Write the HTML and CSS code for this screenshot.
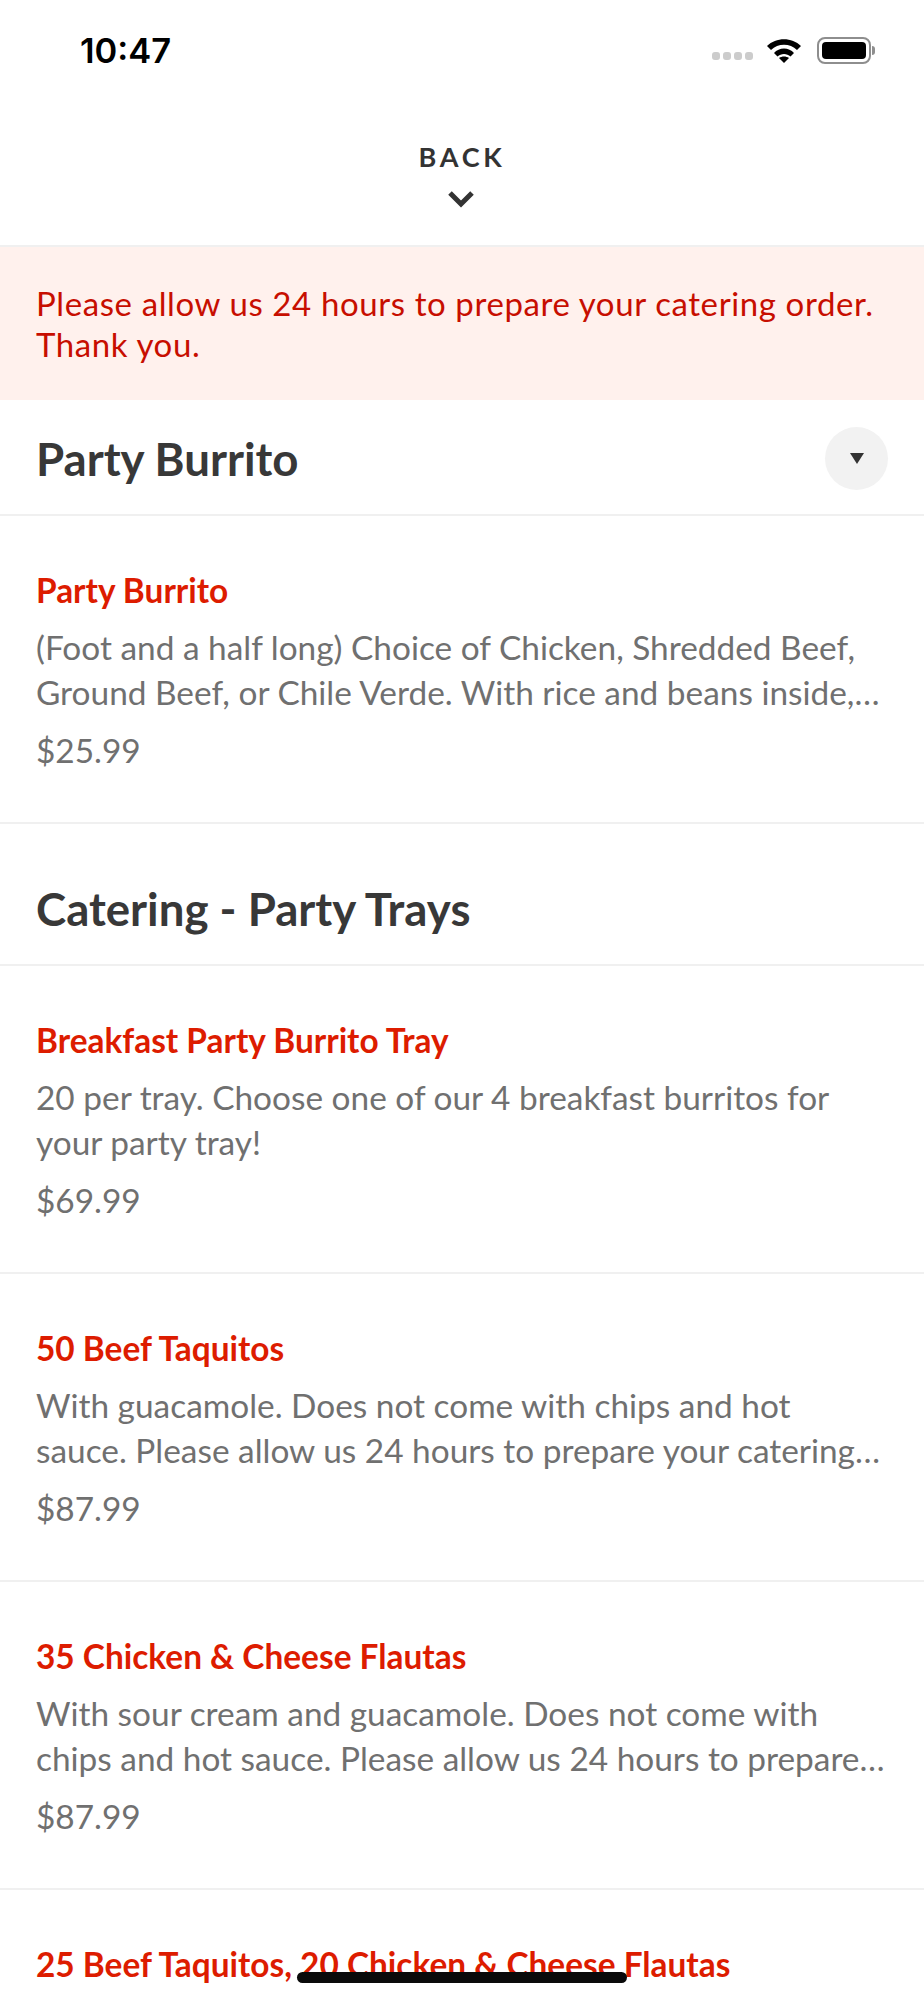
FILE: index.html
```html
<!DOCTYPE html>
<html lang="en">
<head>
  <meta charset="UTF-8">
  <meta name="viewport" content="width=device-width, initial-scale=1.0">
  <link rel="stylesheet" href="styles.css">
</head>
<body>
  <div class="page">
    <!-- status bar -->
    <div class="status">
      <span class="time">10:47</span>
      <div class="status-icons">
        <div class="signal"><i></i><i></i><i></i><i></i></div>
        <svg class="wifi" width="36" height="26" viewBox="0 0 36 26">
          <path d="M1 9 C10 0 26 0 35 9 L31 13 C24 6 12 6 5 13 Z" fill="#000"/>
          <path d="M8 16 C13 10 23 10 28 16 L24.5 19.5 C21 16 15 16 11.5 19.5 Z" fill="#000"/>
          <path d="M13 21 C16 19 20 19 23 21 L18 26 Z" fill="#000"/>
        </svg>
        <div class="battery"><div class="battery-fill"></div></div>
        <div class="battery-cap"></div>
      </div>
    </div>

    <div class="back">
      <span class="back-label">BACK</span>
      <svg class="back-arrow" width="28" height="18" viewBox="0 0 28 18"><path d="M3 3 L14 14 L25 3" fill="none" stroke="#333" stroke-width="5"/></svg>
    </div>

    <div class="notice">Please allow us 24 hours to prepare your catering order.<br>Thank you.</div>

    <div class="section-head section-first">
      <h2>Party Burrito</h2>
      <div class="toggle"><span class="toggle-arrow"></span></div>
    </div>
    <div class="item">
      <div class="item-name">Party Burrito</div>
      <div class="item-desc">(Foot and a half long) Choice of Chicken, Shredded Beef,<br>Ground Beef, or Chile Verde. With rice and beans inside,…</div>
      <div class="item-price">$25.99</div>
    </div>

    <div class="section-head">
      <h2>Catering - Party Trays</h2>
    </div>
    <div class="item">
      <div class="item-name">Breakfast Party Burrito Tray</div>
      <div class="item-desc">20 per tray. Choose one of our 4 breakfast burritos for<br>your party tray!</div>
      <div class="item-price">$69.99</div>
    </div>
    <div class="item">
      <div class="item-name">50 Beef Taquitos</div>
      <div class="item-desc">With guacamole. Does not come with chips and hot<br>sauce. Please allow us 24 hours to prepare your catering…</div>
      <div class="item-price">$87.99</div>
    </div>
    <div class="item">
      <div class="item-name">35 Chicken &amp; Cheese Flautas</div>
      <div class="item-desc">With sour cream and guacamole. Does not come with<br>chips and hot sauce. Please allow us 24 hours to prepare…</div>
      <div class="item-price">$87.99</div>
    </div>
    <div class="item">
      <div class="item-name">25 Beef Taquitos, 20 Chicken &amp; Cheese Flautas</div>
    </div>

    <div class="home-bar"></div>
  </div>
</body>
</html>
```

FILE: styles.css
```css
html {
	background-color: #fff;
}

body {
	margin: 0;
	padding: 0;
	font-family: Lato, sans-serif;
	color: #333;
}

.page {
	position: relative;
	width: 924px;
	height: 2000px;
	overflow: hidden;
	background-color: #fff;
}

.status {
	height: 100px;
	display: flex;
	justify-content: space-between;
	align-items: center;
	padding: 0 49px 0 80px;
	box-sizing: border-box;
}

.time {
	font-family: Inter, sans-serif;
	font-size: 34.5px;
	font-weight: 600;
	color: #000;
}

.status-icons {
	display: flex;
	align-items: center;
}

.signal {
	display: flex;
	gap: 3px;
	margin: 12px 13px 0 0;
}

.signal i {
	width: 8px;
	height: 8px;
	border-radius: 3px;
	background-color: #ccc;
}

.battery {
	width: 54px;
	height: 27px;
	margin-left: 15px;
	padding: 3px;
	box-sizing: border-box;
	border: 2px solid #8e8e8e;
	border-radius: 8px;
}

.battery-fill {
	height: 100%;
	background-color: #000;
	border-radius: 4px;
}

.battery-cap {
	width: 3px;
	height: 9px;
	margin-left: 1px;
	background-color: #8e8e8e;
	border-radius: 0 3px 3px 0;
}

.back {
	height: 147px;
	box-sizing: border-box;
	padding-top: 42px;
	display: flex;
	flex-direction: column;
	align-items: center;
	gap: 18px;
	border-bottom: 2px solid #f0f0f0;
}

.back-label {
	font-size: 27px;
	line-height: 30px;
	font-weight: 700;
	letter-spacing: 3.8px;
	color: #333;
}

.back-arrow {
	margin-right: 2px;
}

.notice {
	height: 153px;
	box-sizing: border-box;
	padding: 36px 36px 0;
	font-size: 33px;
	line-height: 41px;
	letter-spacing: 0.6px;
	color: #c70e00;
	background-color: #fff1ed;
}

.section-head {
	height: 142px;
	box-sizing: border-box;
	padding: 0 36px 30px;
	display: flex;
	justify-content: space-between;
	align-items: flex-end;
	border-bottom: 2px solid #f0f0f0;
}

.section-first {
	height: 116px;
	padding-bottom: 22px;
}

.section-head h2 {
	margin: 0;
	font-size: 45.6px;
	line-height: 50px;
	font-weight: 700;
	color: #383838;
}

.section-first h2 {
	margin-bottom: 8px;
}

.toggle {
	width: 63px;
	height: 63px;
	margin-bottom: 2px;
	border-radius: 50%;
	background-color: #f2f2f2;
	display: flex;
	align-items: center;
	justify-content: center;
}

.toggle-arrow {
	width: 0;
	height: 0;
	margin-left: 1px;
	border-left: 7px solid transparent;
	border-right: 7px solid transparent;
	border-top: 11px solid #333;
}

.item {
	height: 308px;
	box-sizing: border-box;
	padding: 55px 36px 0;
	border-bottom: 2px solid #f0f0f0;
}

.item-name {
	font-size: 33.4px;
	line-height: 38px;
	font-weight: 700;
	color: #dd1c00;
}

.item-desc {
	margin-top: 16px;
	font-size: 33.4px;
	line-height: 45px;
	color: #707070;
}

.item-price {
	margin-top: 13px;
	font-size: 33.4px;
	line-height: 45px;
	color: #707070;
}

.home-bar {
	position: absolute;
	left: 297px;
	top: 1972px;
	width: 330px;
	height: 11px;
	border-radius: 6px;
	background-color: #0a0a0a;
}
```
